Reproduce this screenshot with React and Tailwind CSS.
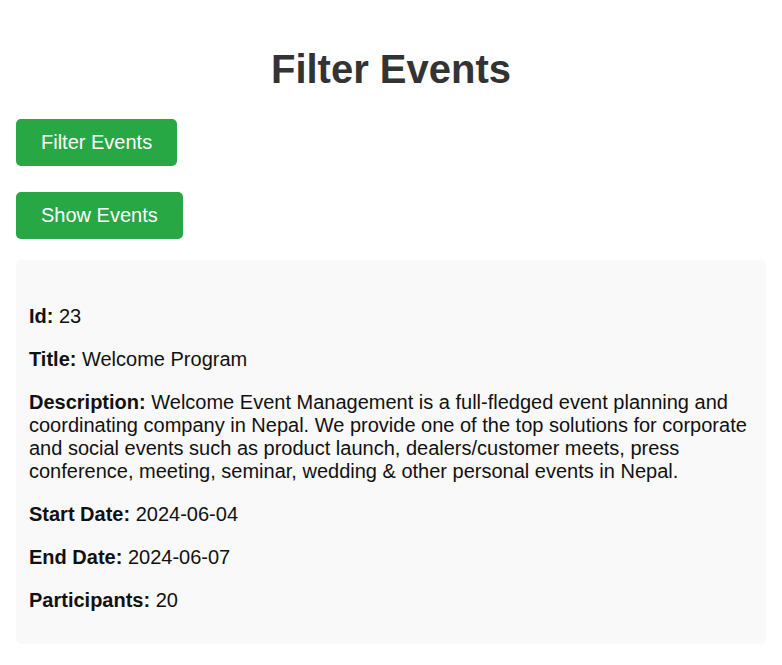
export default function App() {
  const rows = [
    ["Id:", "23"],
    ["Title:", "Welcome Program"],
    [
      "Description:",
      "Welcome Event Management is a full-fledged event planning and coordinating company in Nepal. We provide one of the top solutions for corporate and social events such as product launch, dealers/customer meets, press conference, meeting, seminar, wedding & other personal events in Nepal.",
    ],
    ["Start Date:", "2024-06-04"],
    ["End Date:", "2024-06-07"],
    ["Participants:", "20"],
  ];
  return (
    <div className="bg-white p-4 text-[#111]" style={{ fontFamily: '"Liberation Sans", Arial, sans-serif' }}>
      <h1 className="text-center text-[40px] font-bold leading-[46px] text-[#333] mt-[30px] mb-[27px]">
        Filter Events
      </h1>
      <div className="flex flex-col items-start gap-[26px]">
        <button className="bg-[#28a745] text-white text-[20px] leading-[23px] px-[25px] py-[12px] rounded-[5px]">
          Filter Events
        </button>
        <button className="bg-[#28a745] text-white text-[20px] leading-[23px] px-[25px] py-[12px] rounded-[5px]">
          Show Events
        </button>
      </div>
      <div className="mt-[21px] bg-[#f9f9f9] rounded-[5px] px-[13px] pt-[25px] pb-[12px]">
        {rows.map(([k, v]) => (
          <p key={k} className="text-[20px] leading-[23px] my-[20px]">
            <strong className="font-bold">{k}</strong> {v}
          </p>
        ))}
      </div>
    </div>
  );
}
